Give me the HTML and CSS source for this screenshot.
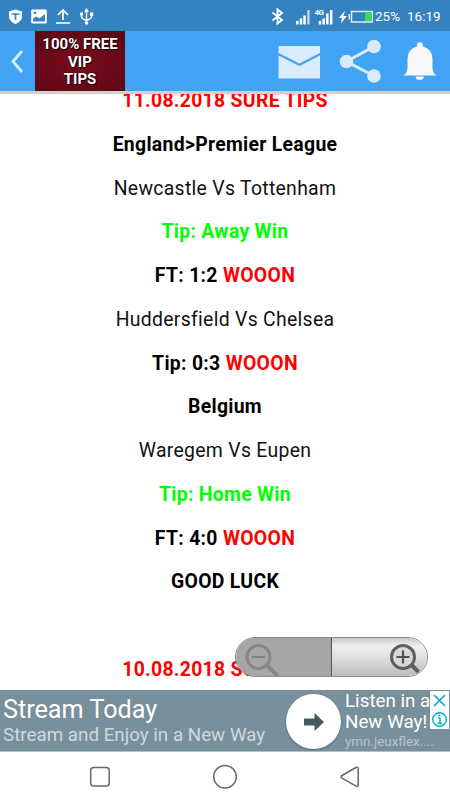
FILE: index.html
```
<!DOCTYPE html>
<html lang="en">
<head>
  <meta charset="UTF-8">
  <meta name="viewport" content="width=device-width, initial-scale=1.0">
  <title>100% Free VIP Tips</title>
  <link rel="stylesheet" href="styles.css">
</head>
<body>
  <div class="statusbar">
    <svg class="status-left" width="100" height="31" viewBox="0 0 100 31">
      <path d="M9 10.500l6.500-2 6.500 2v5c0 3.500-3 6-6.500 7.500-3.500-1.500-6.500-4-6.500-7.500z" fill="#fff"/>
      <path d="M11.500 13h8M15.500 13v6" stroke="#3482c0" stroke-width="1.700" fill="none"/>
      <path d="M32.500 8.500h13q1.300 0 1.300 1.300v11.500q0 1.300-1.300 1.300h-13q-1.300 0-1.300-1.300V9.800q0-1.300 1.300-1.300z" fill="#fff"/>
      <path d="M33 20.500v-3l3.500-2 3 2 5.500-4.500v7.500z" fill="#3482c0"/>
      <circle cx="35" cy="12" r="1.300" fill="#3482c0"/>
      <path d="M56 22h14M63 19V9M58 14l5-5 5 5" stroke="#fff" stroke-width="1.700" fill="none"/>
      <path d="M86.500 9v13M81.500 13v3q0 1.500 5 3.500 5-2 5-3.500v-3" stroke="#fff" stroke-width="1.400" fill="none"/>
      <path d="M84 11l2.500-4 2.500 4zM90 11.500h3.200v3.200H90z" fill="#fff"/>
      <circle cx="81.500" cy="13" r="1.700" fill="#fff"/>
      <circle cx="86.500" cy="22" r="1.800" fill="#fff"/>
    </svg>
    <svg class="status-right" width="105" height="31" viewBox="270 0 105 31">
      <path d="M272.500 11.500l9.500 7.500-4.500 3.500v-14L282 12l-9.500 7.500" stroke="#fff" stroke-width="1.900" fill="none"/>
      <g fill="#fff">
        <path d="M296 20h2.500v3.500H296zM299.700 17.500h2.500v6h-2.500zM303.300 14.500h2.500v9h-2.500z"/>
        <path d="M307.300 9h2.300v14.500h-2.300z" opacity=".7"/>
        <path d="M318.700 20h2.500v3.500h-2.500zM322.400 17.500h2.500v6h-2.500zM326.100 12.500h2.500v11h-2.500zM329.900 9h2.500v14.500h-2.500z"/>
        <path d="M345 9.500l-6 7.500h3.200l-1.500 5.500 6.300-7.500h-3.500z"/>
      </g>
      <text x="314.500" y="13.500" class="net">4G</text>
      <path d="M351.500 10.500h20.800v10.500h-20.800zM349.300 13v5.500" stroke="#dcebf7" stroke-width="1.500" fill="none"/>
      <path d="M365 11.500h6.500v8.500H365z" fill="#30e050"/>
    </svg>
    <span class="battery">25%</span>
    <span class="clock">16:19</span>
  </div>

  <div class="toolbar">
    <svg class="back" width="35" height="60" viewBox="0 0 35 60">
      <path d="M22 20L13 30.500 22 41" stroke="#d9ecfd" stroke-width="2.800" fill="none"/>
    </svg>
    <div class="logo">100% FREE<br>VIP<br>TIPS</div>
    <svg class="actions" width="175" height="60" viewBox="275 31 175 60">
      <g fill="#d9ecfd">
        <path d="M278.500 46h41.500v7L299.500 63.500 278.500 53z"/>
        <path d="M278.500 55.500l21 10.500L320 55.500v23h-41.500z"/>
        <circle cx="346.500" cy="61.500" r="6.800"/>
        <circle cx="374" cy="46.500" r="6.800"/>
        <circle cx="374" cy="76" r="6.800"/>
      </g>
      <path d="M374 46.500l-27.500 15L374 76" stroke="#d9ecfd" stroke-width="3" fill="none"/>
      <path d="M403.500 75.500q4-3 4-7.500v-9q0-10 9.500-12.500v-1.500q0-2.700 2.900-2.700t2.900 2.700v1.500q9.700 2.500 9.700 12.500v9q0 4.500 4 7.500zM415.500 76.500h8.500q-.5 3.500-4.200 3.500t-4.300-3.500z" fill="#f8f8f8"/>
    </svg>
  </div>

  <main class="content">
    <div class="tips">
      <p class="bold red">11.08.2018 SURE TIPS</p>
      <p class="bold">England&gt;Premier League</p>
      <p>Newcastle Vs Tottenham</p>
      <p class="bold green">Tip: Away Win</p>
      <p class="bold">FT: 1:2 <span class="red">WOOON</span></p>
      <p>Huddersfield Vs Chelsea</p>
      <p class="bold">Tip: 0:3 <span class="red">WOOON</span></p>
      <p class="bold">Belgium</p>
      <p>Waregem Vs Eupen</p>
      <p class="bold green">Tip: Home Win</p>
      <p class="bold">FT: 4:0 <span class="red">WOOON</span></p>
      <p class="bold">GOOD LUCK</p>
      <p>&nbsp;</p>
      <p class="bold red">10.08.2018 SURE TIPS</p>
    </div>
    <!-- webview zoom controls -->
    <div class="zoom">
      <div class="zoom-out">
        <svg width="42" height="38" viewBox="0 0 42 38">
          <circle cx="20.500" cy="19" r="11.500" fill="none" stroke="#868686" stroke-width="3"/>
          <path d="M14 19h13" stroke="#808080" stroke-width="2"/>
          <path d="M29 27.500l11 10.500" stroke="#868686" stroke-width="4"/>
        </svg>
      </div>
      <div class="zoom-in">
        <svg width="40" height="38" viewBox="0 0 40 38">
          <circle cx="17" cy="19" r="11.500" fill="#d8d8d8" stroke="#606060" stroke-width="3"/>
          <path d="M10.500 19h13M17 12.500v13" stroke="#505050" stroke-width="2.200"/>
          <path d="M25.500 27l7 7" stroke="#606060" stroke-width="4"/>
        </svg>
      </div>
    </div>
  </main>

  <div class="ad">
    <div class="ad-main">
      <div class="ad-title">Stream Today</div>
      <div class="ad-sub">Stream and Enjoy in a New Way</div>
    </div>
    <div class="ad-arrow">
      <svg width="20" height="18" viewBox="0 0 20 18">
        <path d="M0 5.500h10.500V0L20 9l-9.500 9v-5.500H0z" fill="#455a64"/>
      </svg>
    </div>
    <div class="ad-side">
      <div class="ad-text">Listen in a<br>New Way!</div>
      <div class="ad-link">ymn.jeuxflex....</div>
    </div>
    <div class="ad-choices">
      <svg width="19" height="38" viewBox="0 0 19 38">
        <path d="M4 4l11 11M15 4L4 15" stroke="#00aecd" stroke-width="1.700"/>
        <circle cx="9.500" cy="28.500" r="6.800" fill="none" stroke="#00aecd" stroke-width="1.400"/>
        <path d="M8 27h2v5.500M7.500 32.500h4.500M8.500 24.500h2" stroke="#00aecd" stroke-width="1.500" fill="none"/>
      </svg>
    </div>
  </div>

  <nav class="navbar">
    <svg width="450" height="48" viewBox="0 752 450 48" fill="none" stroke="#686868" stroke-width="1.500">
      <rect x="90.700" y="767.500" width="18.500" height="18.500" rx="3"/>
      <circle cx="225" cy="776.800" r="11.300"/>
      <path d="M356 767.500l-14 8q-2 1.300 0 2.600l14 8q2.200 1 2.200-1.300v-16q0-2.300-2.200-1.300z"/>
    </svg>
  </nav>
</body>
</html>
```

FILE: styles.css
```
* {
  box-sizing: border-box;
}
body {
  margin: 0;
  width: 450px;
  height: 800px;
  display: flex;
  flex-direction: column;
  overflow: hidden;
  background: #fff;
  font-family: Roboto, "Liberation Sans", sans-serif;
}
svg {
  display: block;
  flex-shrink: 0;
}
.statusbar {
  height: 31px;
  flex-shrink: 0;
  display: flex;
  align-items: center;
  background: #3482c0;
  color: #fff;
  font-size: 13.5px;
  line-height: 31px;
  padding-top: 1px;
}
.status-right {
  margin-left: auto;
}
.net {
  font-size: 8px;
  font-weight: bold;
  letter-spacing: -0.5px;
  fill: #fff;
}
.battery {
  width: 32px;
}
.clock {
  width: 43px;
}
.toolbar {
  height: 60px;
  flex-shrink: 0;
  display: flex;
  background: #42a3f5;
}
.logo {
  width: 90px;
  height: 60px;
  padding-top: 5px;
  background: radial-gradient(#7c0a1b, #5c0815);
  color: #fff;
  font-size: 15px;
  font-weight: 700;
  line-height: 17.5px;
  text-align: center;
  text-shadow: 1px 1px 1px #000, 0 0 1px #000;
}
.actions {
  margin-left: auto;
}
.content {
  position: relative;
  height: 599px;
  flex-shrink: 0;
  overflow: hidden;
  border-top: 3px solid #d2d0ce;
}
.tips {
  margin-top: -15px;
  text-align: center;
  font-size: 19.4px;
  letter-spacing: 0.3px;
  color: #111;
}
.tips p {
  margin: 0;
  line-height: 43.75px;
}
.tips .bold {
  font-weight: 700;
  color: #000;
}
.tips .red {
  color: #f00;
}
.tips .green {
  color: #0f0;
}
.zoom {
  position: absolute;
  left: 235px;
  top: 543px;
  width: 193px;
  height: 40px;
  display: flex;
  border: 1px solid #8c8c8c;
  border-radius: 20px;
  overflow: hidden;
}
.zoom-out {
  width: 96px;
  background: #a6a6a6;
  border-right: 1px solid #555;
  padding-left: 2px;
}
.zoom-in {
  flex: 1;
  display: flex;
  justify-content: flex-end;
  padding-right: 1px;
  background: linear-gradient(#c8c8c8, #eee 20%, #e4e4e4 45%, #bcbcbc);
}
.ad {
  position: relative;
  height: 62px;
  flex-shrink: 0;
  display: flex;
  background: #78909c;
  border-bottom: 1px solid #b4c1c8;
  color: #fff;
  white-space: nowrap;
}
.ad-main {
  width: 286px;
  padding: 5px 0 0 3px;
}
.ad-title {
  font-size: 25.2px;
  line-height: 30px;
}
.ad-sub {
  font-size: 18.8px;
  line-height: 20px;
  color: #d0d8dc;
}
.ad-arrow {
  width: 55px;
  height: 55px;
  margin-top: 4px;
  border-radius: 50%;
  background: #fff;
  box-shadow: 0 1px 2px rgba(0, 0, 0, 0.3);
  display: flex;
  align-items: center;
  justify-content: center;
}
.ad-side {
  padding: 1px 0 0 4px;
}
.ad-text {
  font-size: 18.8px;
  line-height: 21px;
}
.ad-link {
  font-size: 13.4px;
  line-height: 18px;
  color: #b9c5cb;
}
.ad-choices {
  position: absolute;
  top: 1px;
  right: 1px;
  background: #fff;
}
.navbar {
  height: 48px;
  background: #fff;
}
```
